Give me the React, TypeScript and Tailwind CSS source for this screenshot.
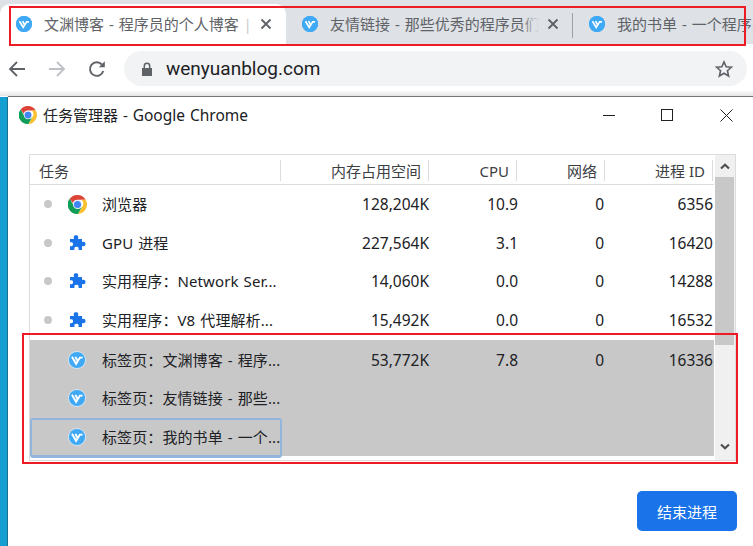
import React from "react";

const FONT = '"Noto Sans", "Noto Sans CJK SC", sans-serif';

function VFav({ size = 16, ring = false }: { size?: number; ring?: boolean }) {
  return (
    <svg width={size} height={size} viewBox="0 0 16 16" className="shrink-0 block">
      <circle cx="8" cy="8" r="8" fill={ring ? "#d5e6f3" : "#3fa9f5"} />
      <circle cx="8" cy="8" r={ring ? 7.2 : 8} fill="#3fa9f5" />
      <path d="M3.500 5.200 7.200 11.400 10.800 5.600M6.600 5.200 8.300 8.400M10 5.900H13" fill="none" stroke="#fff" strokeWidth="1.700" />
    </svg>
  );
}

function ChromeIcon({ size = 18 }: { size?: number }) {
  return (
    <svg width={size} height={size} viewBox="4 4 40 40" className="shrink-0 block">
      <path d="M24 4a20 20 0 0 1 17.300 10H24a10 10 0 0 0-9.600 7.200L7.600 11.800A20 20 0 0 1 24 4Z" fill="#db4437" />
      <path d="M41.300 14A20 20 0 0 1 25 44l8.600-14.900A10 10 0 0 0 32 14Z" fill="#fbc02d" />
      <path d="M7.600 11.800 16.200 26.700A10 10 0 0 0 33 29.100L25 44A20 20 0 0 1 7.600 11.800Z" fill="#0f9d58" />
      <circle cx="24" cy="24" r="9.500" fill="#e8eef8" />
      <circle cx="24" cy="24" r="7.500" fill="#4285f4" />
    </svg>
  );
}

function Puzzle() {
  return (
    <svg width="18" height="18" viewBox="0 0 18 18" className="shrink-0 block">
      <path
        d="M2 5H6C5.500 3 5.500 1.200 8 1.200 10.500 1.200 10.500 3 10 5H14V8C16 7.500 17.500 8 17.500 10 17.500 12 16 12.500 14 12V16H10.500C11 14 10.500 12.800 8.500 12.800 6.500 12.800 6 14 6.500 16H2V12C4 12.500 5 12 5 10.300 5 8.600 4 8 2 8.500Z"
        fill="#1a73e8"
      />
    </svg>
  );
}

function XIcon({ color = "#5f6368" }: { color?: string }) {
  return (
    <svg width="12" height="12" viewBox="0 0 12 12" className="block">
      <path d="M1.500 1.500 10.500 10.500M10.500 1.500 1.500 10.500" stroke={color} strokeWidth="1.900" />
    </svg>
  );
}

function Tab({ title, active, close, width, sep, fade }: { title: React.ReactNode; active?: boolean; close?: boolean; width: string; sep?: boolean; fade?: boolean }) {
  return (
    <div
      className={`relative flex items-center h-[40px] shrink-0 pl-[16px] ${width} ${active ? "bg-white rounded-t-[10px]" : ""}`}
    >
      <VFav />
      <span className={`relative ml-[12px] text-[15px] leading-[20px] text-[#5f6368] whitespace-nowrap overflow-hidden [word-spacing:1px] ${close ? "flex-1 min-w-0" : ""}`}>
        {title}
        {fade && <span className="absolute right-0 top-0 h-full w-[18px] bg-gradient-to-r from-transparent to-[#dee1e6]" />}
      </span>
      {close && (
        <span className="flex items-center justify-center w-[12px] mr-[14px] ml-[8px]">
          <XIcon />
        </span>
      )}
      {sep && <span className="absolute right-0 top-[9px] h-[25px] w-px bg-[#9aa0a6]" />}
    </div>
  );
}

type Row = { name: string; icon: "chrome" | "puzzle" | "fav"; mem?: string; cpu?: string; net?: string; pid?: string; sel?: boolean; focus?: boolean };

const rows: Row[] = [
  { name: "浏览器", icon: "chrome", mem: "128,204K", cpu: "10.9", net: "0", pid: "6356" },
  { name: "GPU 进程", icon: "puzzle", mem: "227,564K", cpu: "3.1", net: "0", pid: "16420" },
  { name: "实用程序：Network Ser...", icon: "puzzle", mem: "14,060K", cpu: "0.0", net: "0", pid: "14288" },
  { name: "实用程序：V8 代理解析...", icon: "puzzle", mem: "15,492K", cpu: "0.0", net: "0", pid: "16532" },
  { name: "标签页：文渊博客 - 程序...", icon: "fav", mem: "53,772K", cpu: "7.8", net: "0", pid: "16336", sel: true },
  { name: "标签页：友情链接 - 那些...", icon: "fav", sel: true },
  { name: "标签页：我的书单 - 一个...", icon: "fav", sel: true, focus: true },
];

function HeaderCell({ label, width }: { label: string; width: string }) {
  return (
    <div className={`${width} h-[21px] border-r border-[#dcdcdc] flex items-center justify-end pr-[7px]`}>
      {label}
    </div>
  );
}

export default function App() {
  return (
    <div className="relative w-[753px] h-[546px] overflow-hidden bg-white text-[#202124]" style={{ fontFamily: FONT }}>
      {/* Tab strip */}
      <div className="h-[44px] bg-[#dee1e6] flex items-end">
        <Tab
          title={<>文渊博客 - 程序员的个人博客 <span className="text-[#c8cacc]">|</span></>}
          active
          close
          width="w-[286px]"
        />
        <Tab title="友情链接 - 那些优秀的程序员们" close fade width="w-[287px]" sep />
        <Tab title="我的书单 - 一个程序员" width="w-[180px]" />
      </div>

      {/* Toolbar */}
      <div className="relative h-[52px] bg-white flex items-center pl-[8px] pr-[6px] pb-[3px]">
        <svg width="18" height="18" viewBox="0 0 18 18" className="block">
          <path d="M17 9H2.500M9 2 2 9l7 7" fill="none" stroke="#5f6368" strokeWidth="1.800" />
        </svg>
        <svg width="18" height="18" viewBox="0 0 18 18" className="block ml-[22px]">
          <path d="M1 9h14.500M9 2l7 7-7 7" fill="none" stroke="#bdc1c6" strokeWidth="1.800" />
        </svg>
        <svg width="18" height="18" viewBox="0 0 18 18" className="block ml-[22px]">
          <path d="M15.300 11a6.800 6.800 0 1 1-1.400-6.500" fill="none" stroke="#5f6368" strokeWidth="1.900" />
          <path d="M16.800 1.300v6h-6Z" fill="#5f6368" />
        </svg>
        <div className="ml-[18px] flex-1 h-[35px] rounded-full bg-[#f1f3f4] flex items-center pl-[17px] pr-[13px]">
          <svg width="12" height="14" viewBox="0 0 12 14" className="block">
            <path d="M1 6h10v8H1Z" fill="#5f6368" />
            <path d="M3.300 6V4a2.700 2.700 0 0 1 5.400 0v2" fill="none" stroke="#5f6368" strokeWidth="1.500" />
          </svg>
          <span className="ml-[13px] text-[19px] leading-[24px] text-[#202124]" style={{ fontFamily: '"Roboto", sans-serif' }}>
            wenyuanblog.com
          </span>
          <svg width="20" height="20" viewBox="0 0 24 24" className="block ml-auto">
            <path d="m12 3.500 2.600 5.800 6.200.6-4.700 4.200 1.400 6.200L12 17l-5.500 3.300 1.400-6.200-4.700-4.200 6.200-.6Z" fill="none" stroke="#5f6368" strokeWidth="2" />
          </svg>
        </div>
        <span className="absolute left-0 right-0 bottom-0 h-[6px] bg-gradient-to-b from-transparent to-[#e4e4e4]" />
      </div>

      {/* Lower area: page strip + dialog */}
      <div className="flex h-[450px]">
        <div className="w-[8px] bg-[#159fd0] border-r border-[#1c6f8d] mt-[1px]" />
        <div className="flex-1 bg-white border-t border-[#70757a] flex flex-col">
          {/* title bar */}
          <div className="h-[36px] flex items-center pl-[11px] shrink-0">
            <ChromeIcon size={18} />
            <span className="ml-[6px] text-[15px] leading-[20px] text-[#202124] [word-spacing:1px]">
              任务管理器 - <span className="text-[15.5px]">Google Chrome</span>
            </span>
            <div className="ml-auto flex items-center">
              <span className="w-[12px] h-px bg-[#202124] mr-[46px]" />
              <span className="w-[12px] h-[12px] border border-[#202124] mr-[47px]" />
              <svg width="13" height="13" viewBox="0 0 13 13" className="block mr-[20px]">
                <path d="M.5.500l12 12M12.500.500l-12 12" stroke="#202124" strokeWidth="1" />
              </svg>
            </div>
          </div>

          {/* table */}
          <div className="ml-[21px] mt-[21px] w-[707px] h-[307px] border border-[#dcdcdc] flex text-[15px] leading-[20px] text-[#202124]">
            <div className="w-[684px] shrink-0 flex flex-col">
              <div className="h-[30px] shrink-0 flex items-center pt-[2px] border-b border-[#dcdcdc] text-[#3c4043]">
                <div className="w-[251px] h-[21px] border-r border-[#dcdcdc] pl-[9px] flex items-center">任务</div>
                <HeaderCell label="内存占用空间" width="w-[148px]" />
                <HeaderCell label="CPU" width="w-[88px]" />
                <HeaderCell label="网络" width="w-[88px]" />
                <HeaderCell label="进程 ID" width="w-[108px]" />
              </div>
              <div className="flex-1 flex flex-col">
                {rows.map((r, i) => (
                  <div
                    key={i}
                    className={`relative flex items-center shrink-0 ${i === 4 ? "mt-[1px]" : ""} ${r.sel ? "bg-[#c8c8c8]" : ""} ${i < 4 ? "h-[38.6px]" : "h-[38.7px]"}`}
                  >
                    {r.focus && (
                      <span className="absolute left-0 top-0 w-[252px] h-[40px] rounded-[3px] border-2 border-[#93b4dc] border-b-[3px]" />
                    )}
                    <span className="w-[38px] flex justify-end shrink-0 pr-[16px]">
                      {!r.sel && <span className="w-[8px] h-[8px] rounded-full bg-[#c8c8c8] block" />}
                    </span>
                    <span className="w-[18px] shrink-0 flex justify-center">
                      {r.icon === "chrome" && <ChromeIcon size={19} />}
                      {r.icon === "puzzle" && <Puzzle />}
                      {r.icon === "fav" && <VFav size={18} ring />}
                    </span>
                    <span className="ml-[16px] w-[180px] shrink-0 whitespace-nowrap overflow-hidden tracking-[0.1px] [word-spacing:1px]">{r.name}</span>
                    <span className="w-[147px] text-right text-[15.5px]">{r.mem}</span>
                    <span className="w-[89px] text-right text-[15.5px]">{r.cpu}</span>
                    <span className="w-[86px] text-right text-[15.5px]">{r.net}</span>
                    <span className="w-[109px] text-right text-[15.5px]">{r.pid}</span>
                  </div>
                ))}
              </div>
            </div>
            {/* scrollbar */}
            <div className="flex-1 ml-[1px] bg-[#f0f0f0] flex flex-col">
              <div className="h-[22px] shrink-0 flex items-center justify-center pr-[1px]">
                <svg width="10" height="7" viewBox="0 0 10 7" className="block">
                  <path d="M1 5.500 5 1.700l4 3.800" fill="none" stroke="#505050" strokeWidth="2.200" />
                </svg>
              </div>
              <div className="w-[19px] h-[168px] bg-[#c8c8c8] shrink-0" />
              <div className="flex-1" />
              <div className="h-[20px] shrink-0 flex items-center justify-center mb-[4px] pr-[1px]">
                <svg width="10" height="7" viewBox="0 0 10 7" className="block">
                  <path d="M1 1.500 5 5.300l4-3.800" fill="none" stroke="#505050" strokeWidth="2.200" />
                </svg>
              </div>
            </div>
          </div>

          {/* footer */}
          <div className="flex justify-end pr-[16px] mt-[30px]">
            <button className="w-[100px] h-[40px] rounded-[5px] bg-[#1a73e8] text-white text-[15px] pt-[2px]">结束进程</button>
          </div>
        </div>
      </div>

      {/* annotation rectangles */}
      <div className="absolute left-[9px] top-[6px] w-[737px] h-[40px] border-2 border-[#ed1c24] pointer-events-none" />
      <div className="absolute left-[22px] top-[333px] w-[716px] h-[131px] border-2 border-[#ed1c24] pointer-events-none" />
    </div>
  );
}
